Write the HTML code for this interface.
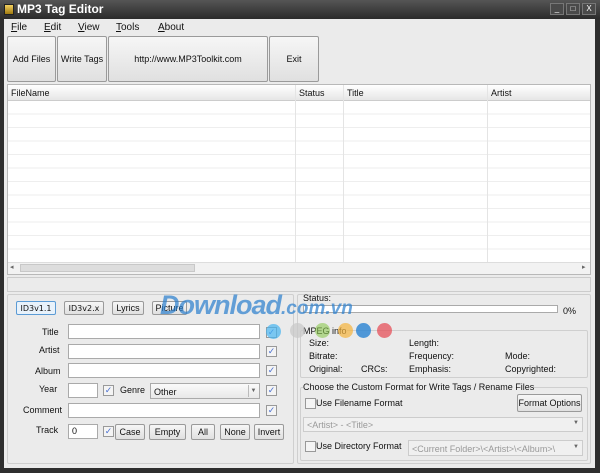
<!DOCTYPE html>
<html><head><meta charset="utf-8"><style>
*{box-sizing:border-box;margin:0;padding:0}
body{width:600px;height:473px;overflow:hidden;background:#2e2e2e;font-family:"Liberation Sans",sans-serif;font-size:9px;color:#111;position:relative}
.a{position:absolute}
.btn{position:absolute;border:1px solid #9a9a9a;background:linear-gradient(#f6f6f6,#e0e0e0);display:flex;align-items:center;justify-content:center;font-size:9px;border-radius:2px}
.inp{position:absolute;background:#fff;border:1px solid #aaa}
.cb{position:absolute;width:11px;height:11px;border:1px solid #999;background:#f4f4f4;color:#4a6fd0;font-size:9px;line-height:9px;text-align:center}
.lbl{position:absolute;font-size:9px}
.grp{position:absolute;border:1px solid #cfcfcf;border-radius:2px}
</style></head><body>
<div class="a" style="left:0;top:0;width:600px;height:19px;background:linear-gradient(#555,#2b2b2b)"></div>
<div class="a" style="left:4px;top:4px;width:10px;height:11px;background:linear-gradient(#f3d060,#a07a10);border:1px solid #222"></div>
<div class="a" style="left:17px;top:2px;color:#fff;font-weight:bold;font-size:12px">MP3 Tag Editor</div>
<div class="a" style="left:550px;top:3px;width:14px;height:12px;background:#4a4a4a;border:1px solid #777;color:#fff;font-size:8px;text-align:center;line-height:10px">_</div>
<div class="a" style="left:566px;top:3px;width:14px;height:12px;background:#4a4a4a;border:1px solid #777;color:#fff;font-size:8px;text-align:center;line-height:10px">□</div>
<div class="a" style="left:582px;top:3px;width:14px;height:12px;background:#4a4a4a;border:1px solid #777;color:#fff;font-size:8px;text-align:center;line-height:10px">X</div>
<div class="a" style="left:4px;top:19px;width:591px;height:449px;background:#ebebeb"></div>
<div class="a" style="left:11px;top:22px;font-size:10px"><u>F</u>ile</div>
<div class="a" style="left:44px;top:22px;font-size:10px"><u>E</u>dit</div>
<div class="a" style="left:78px;top:22px;font-size:10px"><u>V</u>iew</div>
<div class="a" style="left:116px;top:22px;font-size:10px"><u>T</u>ools</div>
<div class="a" style="left:158px;top:22px;font-size:10px"><u>A</u>bout</div>
<div class="btn" style="left:7px;top:36px;width:49px;height:46px">Add Files</div>
<div class="btn" style="left:57px;top:36px;width:50px;height:46px">Write Tags</div>
<div class="btn" style="left:108px;top:36px;width:160px;height:46px">http://www.MP3Toolkit.com</div>
<div class="btn" style="left:269px;top:36px;width:50px;height:46px">Exit</div>
<div class="a" style="left:7px;top:84px;width:584px;height:191px;background:#fff;border:1px solid #b8b8b8;
background-image:repeating-linear-gradient(#fff 0 12.5px,#eee 12.5px 13.5px);background-position:0 16px"></div>
<div class="a" style="left:8px;top:85px;width:582px;height:16px;background:linear-gradient(#fff,#e6e6e6);border-bottom:1px solid #ccc"></div>
<div class="lbl" style="left:11px;top:88px">FileName</div>
<div class="lbl" style="left:299px;top:88px">Status</div>
<div class="lbl" style="left:347px;top:88px">Title</div>
<div class="lbl" style="left:491px;top:88px">Artist</div>
<div class="a" style="left:295px;top:85px;width:1px;height:177px;background:#e4e4e4"></div>
<div class="a" style="left:343px;top:85px;width:1px;height:177px;background:#e4e4e4"></div>
<div class="a" style="left:487px;top:85px;width:1px;height:177px;background:#e4e4e4"></div>
<div class="a" style="left:8px;top:262px;width:582px;height:12px;background:#f2f2f2;border-top:1px solid #ddd"></div>
<div class="a" style="left:20px;top:264px;width:175px;height:8px;background:#ddd;border:1px solid #c8c8c8"></div>
<div class="lbl" style="left:10px;top:263px;font-size:7px;color:#666">◂</div>
<div class="lbl" style="left:582px;top:263px;font-size:7px;color:#666">▸</div>
<div class="a" style="left:7px;top:277px;width:584px;height:15px;border:1px solid #ccc"></div>
<div class="grp" style="left:7px;top:294px;width:287px;height:170px"></div>
<div class="btn" style="left:16px;top:301px;width:40px;height:14px;border-color:#5b9bd5;background:#e8f2fb;font-family:'DejaVu Sans';font-size:8px">ID3v1.1</div>
<div class="btn" style="left:64px;top:301px;width:40px;height:14px;font-family:'DejaVu Sans';font-size:8px">ID3v2.x</div>
<div class="btn" style="left:112px;top:301px;width:32px;height:14px">Lyrics</div>
<div class="btn" style="left:152px;top:301px;width:35px;height:14px">Picture</div>
<div class="grp" style="left:297px;top:294px;width:294px;height:170px"></div>
<div class="lbl" style="left:303px;top:293px">Status:</div>
<div class="a" style="left:303px;top:305px;width:255px;height:8px;background:#fff;border:1px solid #aaa"></div>
<div class="lbl" style="left:563px;top:306px">0%</div>
<div class="a" style="left:160px;top:290px;white-space:nowrap;font-weight:bold;font-style:italic;color:rgba(40,125,205,.7);line-height:30px"><span style="font-size:27px;letter-spacing:-1px">Download</span><span style="font-size:19px">.com.vn</span></div>
<div class="lbl" style="left:42px;top:327px">Title</div>
<div class="lbl" style="left:39px;top:345px">Artist</div>
<div class="lbl" style="left:35px;top:366px">Album</div>
<div class="lbl" style="left:39px;top:384px">Year</div>
<div class="lbl" style="left:23px;top:405px">Comment</div>
<div class="lbl" style="left:36px;top:425px">Track</div>
<div class="inp" style="left:68px;top:324px;width:192px;height:15px"></div>
<div class="inp" style="left:68px;top:344px;width:192px;height:15px"></div>
<div class="inp" style="left:68px;top:363px;width:192px;height:15px"></div>
<div class="inp" style="left:68px;top:383px;width:30px;height:15px"></div>
<div class="inp" style="left:68px;top:403px;width:192px;height:15px"></div>
<div class="inp" style="left:68px;top:424px;width:30px;height:15px;padding-left:3px;font-size:9px;line-height:13px">0</div>
<div class="lbl" style="left:120px;top:385px">Genre</div>
<div class="inp" style="left:150px;top:383px;width:110px;height:16px;background:linear-gradient(#fafafa,#e8e8e8);padding:3px">Other</div>
<div class="a" style="left:248px;top:385px;width:10px;height:12px;border-left:1px solid #bbb;font-size:6px;color:#666;text-align:center;line-height:12px">▼</div>
<div class="cb" style="left:266px;top:327px">✓</div>
<div class="cb" style="left:266px;top:346px">✓</div>
<div class="cb" style="left:266px;top:365px">✓</div>
<div class="cb" style="left:103px;top:385px">✓</div>
<div class="cb" style="left:266px;top:385px">✓</div>
<div class="cb" style="left:266px;top:405px">✓</div>
<div class="cb" style="left:103px;top:426px">✓</div>
<div class="btn" style="left:115px;top:424px;width:30px;height:16px">Case</div>
<div class="btn" style="left:149px;top:424px;width:37px;height:16px">Empty</div>
<div class="btn" style="left:191px;top:424px;width:24px;height:16px">All</div>
<div class="btn" style="left:220px;top:424px;width:30px;height:16px">None</div>
<div class="btn" style="left:254px;top:424px;width:30px;height:16px">Invert</div>
<div class="grp" style="left:300px;top:330px;width:288px;height:48px"></div>
<div class="lbl" style="left:303px;top:326px;background:#ebebeb">MPEG info</div>
<div class="a" style="left:266px;top:324px;width:15px;height:15px;border-radius:50%;background:rgba(70,180,240,.7)"></div>
<div class="a" style="left:290px;top:323px;width:15px;height:15px;border-radius:50%;background:rgba(200,200,200,.7)"></div>
<div class="a" style="left:315px;top:323px;width:15px;height:15px;border-radius:50%;background:rgba(140,200,80,.6)"></div>
<div class="a" style="left:338px;top:323px;width:15px;height:15px;border-radius:50%;background:rgba(245,180,60,.7)"></div>
<div class="a" style="left:356px;top:323px;width:15px;height:15px;border-radius:50%;background:rgba(40,130,210,.8)"></div>
<div class="a" style="left:377px;top:323px;width:15px;height:15px;border-radius:50%;background:rgba(230,80,90,.75)"></div>
<div class="lbl" style="left:309px;top:338px">Size:</div>
<div class="lbl" style="left:409px;top:338px">Length:</div>
<div class="lbl" style="left:309px;top:351px">Bitrate:</div>
<div class="lbl" style="left:409px;top:351px">Frequency:</div>
<div class="lbl" style="left:505px;top:351px">Mode:</div>
<div class="lbl" style="left:309px;top:364px">Original:</div>
<div class="lbl" style="left:361px;top:364px">CRCs:</div>
<div class="lbl" style="left:409px;top:364px">Emphasis:</div>
<div class="lbl" style="left:505px;top:364px">Copyrighted:</div>
<div class="grp" style="left:300px;top:387px;width:288px;height:74px"></div>
<div class="lbl" style="left:303px;top:382px;background:#ebebeb">Choose the Custom Format for Write Tags / Rename Files</div>
<div class="cb" style="left:305px;top:398px;color:transparent"></div>
<div class="lbl" style="left:316px;top:398px">Use Filename Format</div>
<div class="btn" style="left:517px;top:394px;width:65px;height:18px">Format Options</div>
<div class="inp" style="left:303px;top:417px;width:280px;height:15px;background:#f0f0f0;border-color:#ccc;color:#999;padding:2px 3px">&lt;Artist&gt; - &lt;Title&gt;</div>
<div class="lbl" style="left:573px;top:420px;font-size:6px;color:#666">▼</div>
<div class="cb" style="left:305px;top:441px;color:transparent"></div>
<div class="lbl" style="left:316px;top:441px">Use Directory Format</div>
<div class="inp" style="left:408px;top:440px;width:175px;height:16px;background:#f0f0f0;border-color:#ccc;color:#999;padding:3px 3px">&lt;Current Folder&gt;\&lt;Artist&gt;\&lt;Album&gt;\</div>
<div class="lbl" style="left:573px;top:444px;font-size:6px;color:#666">▼</div>
</body></html>
